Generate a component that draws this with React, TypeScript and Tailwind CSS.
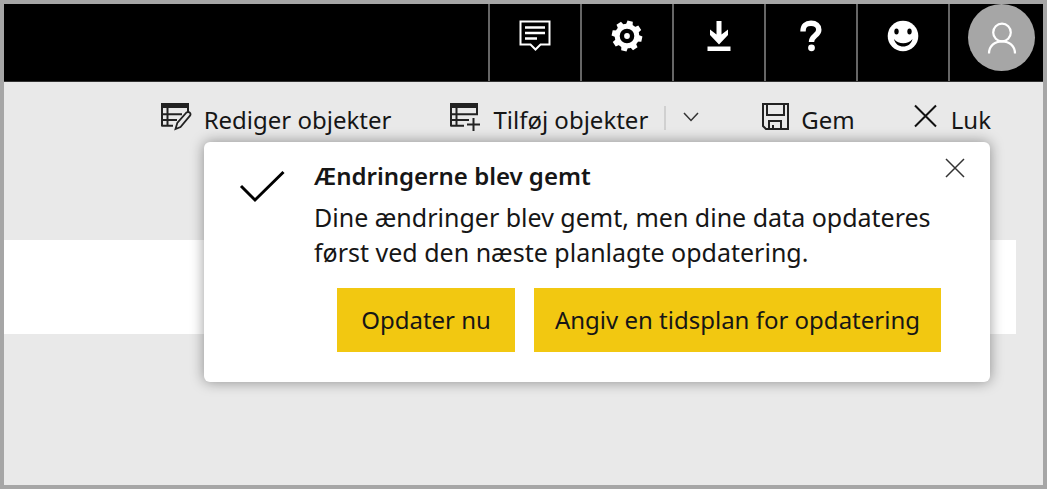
import type { ReactNode } from "react";

function HeaderButton({ label, children }: { label: string; children: ReactNode }) {
  return (
    <button
      type="button"
      aria-label={label}
      className="flex w-[92px] justify-center border-l-2 border-[#666666] pt-4 text-white"
    >
      <svg width="32" height="32" viewBox="0 0 32 32" fill="none">
        {children}
      </svg>
    </button>
  );
}

function TableIcon({ children }: { children: ReactNode }) {
  return (
    <svg className="shrink-0" width="32" height="30" viewBox="0 0 32 30" fill="none" stroke="#222222" strokeWidth="2">
      <path d="M1 1h28v5H1z" fill="#222222" stroke="none" />
      {children}
    </svg>
  );
}

function Header() {
  return (
    <header className="flex h-[78px] justify-end overflow-hidden border-b border-[#333333] bg-black">
      <HeaderButton label="Kommentarer">
        <path d="M1.5 1.5h29v23h-9l-5 5-5-5h-10z" stroke="currentColor" strokeWidth="2" />
        <path d="M6 7.5h20M6 13h20M6 18.500h12" stroke="currentColor" strokeWidth="2.400" />
      </HeaderButton>
      <HeaderButton label="Indstillinger">
        <g fill="currentColor">
          <circle cx="16" cy="16" r="9.800" fill="none" stroke="currentColor" strokeWidth="5" />
          <circle cx="16" cy="16" r="2.900" />
          <g transform="rotate(12 16 16)">
            <path d="M13.300 0.800h5.400l1 6h-7.400zM13.300 31.200h5.400l1-6h-7.400z" />
            <path d="M13.300 0.800h5.400l1 6h-7.400zM13.300 31.200h5.400l1-6h-7.400z" transform="rotate(45 16 16)" />
            <path d="M13.300 0.800h5.400l1 6h-7.400zM13.300 31.200h5.400l1-6h-7.400z" transform="rotate(90 16 16)" />
            <path d="M13.300 0.800h5.400l1 6h-7.400zM13.300 31.200h5.400l1-6h-7.400z" transform="rotate(135 16 16)" />
          </g>
        </g>
      </HeaderButton>
      <HeaderButton label="Hent">
        <path d="M13.500 1h5v13.500l6.500-5v5.500L16 24.500 7 15V9.500l6.500 5z" fill="currentColor" />
        <path d="M4.500 26.500h23v4.500h-23z" fill="currentColor" />
      </HeaderButton>
      <HeaderButton label="Hjælp">
        <path
          d="M8 11.500C8 5.500 11 3.300 16 3.300c5 0 7.800 2.700 7.800 6.400 0 5.800-7.300 6-7.300 12.300"
          stroke="currentColor"
          strokeWidth="5.400"
        />
        <circle cx="16.500" cy="27.800" r="3.400" fill="currentColor" />
      </HeaderButton>
      <HeaderButton label="Feedback">
        <circle cx="16" cy="16" r="15.300" fill="currentColor" />
        <ellipse cx="9.500" cy="11.500" rx="2.200" ry="2.900" fill="black" />
        <ellipse cx="22.500" cy="11.500" rx="2.200" ry="2.900" fill="black" />
        <path d="M7 19c4.500 5.800 14 5.800 18.500 0-2 10-16.500 10-18.500 0z" fill="black" />
      </HeaderButton>
      <div className="flex w-[95px] items-start justify-end border-l-2 border-[#666666] pr-2">
        <button
          type="button"
          aria-label="Konto"
          className="flex h-[67px] w-[67px] items-center justify-center rounded-full bg-[#a6a6a6]"
        >
          <svg width="30" height="32" viewBox="0 0 30 32" fill="none" stroke="white" strokeWidth="2.200">
            <circle cx="15" cy="10.500" r="8.800" />
            <path d="M2 31.500C2 24 7.500 19.300 15 19.300S28 24 28 31.500" />
          </svg>
        </button>
      </div>
    </header>
  );
}

function Toolbar() {
  return (
    <div role="toolbar" className="flex items-start justify-end pt-5 pr-[52px] text-2xl leading-9">
      <button type="button" className="mr-[58px] flex items-start gap-3 whitespace-nowrap">
        <TableIcon>
          <path d="M28 6v5M2 6v18.500M7.500 6v18M2 12.200h20M2 18h15M2 23.700h11" />
          <path d="M15.500 27l1.800-6L26.500 10.500c2.500-1.500 5 1 3.500 3.200L20.500 25z" strokeWidth="1.800" />
        </TableIcon>
        Rediger objekter
      </button>
      <button type="button" className="flex items-start gap-3 whitespace-nowrap">
        <TableIcon>
          <path d="M28 6v6.200M2 6v18.500M7.500 6v17M2 12.200h27M2 18h18M2 23.700h13M24.500 16v13M18 22.500h13" />
        </TableIcon>
        Tilføj objekter
      </button>
      <span className="mt-1 ml-4 h-6 w-[2px] bg-[#d0d0d0]" />
      <button type="button" aria-label="Flere valgmuligheder" className="mt-2 mr-[62px] ml-4">
        <svg width="18" height="14" viewBox="0 0 18 14" fill="none" stroke="#333333" strokeWidth="1.500">
          <path d="M2 3l7 7.500L16 3" />
        </svg>
      </button>
      <button type="button" className="mr-[58px] flex items-start gap-3">
        <svg className="shrink-0" width="27" height="28" viewBox="0 0 27 28" fill="none" stroke="#222222" strokeWidth="2">
          <path d="M1 2h25v25H4l-3-3z" />
          <path d="M5 2v11h17V2M7 27v-8h12v8M11 27v-4" />
        </svg>
        Gem
      </button>
      <button type="button" className="flex items-start gap-3">
        <svg className="shrink-0" width="26" height="28" viewBox="0 0 26 28" fill="none" stroke="#111111" strokeWidth="2">
          <path d="M2 3.500l21 21M23 3.500l-21 21" />
        </svg>
        Luk
      </button>
    </div>
  );
}

function SavedNotice() {
  return (
    <section
      role="dialog"
      aria-labelledby="notice-title"
      className="absolute top-[138px] right-[53px] flex w-[786px] max-w-full items-start rounded-md bg-white pt-4 pr-[22px] pb-[30px] pl-[34px] shadow-[0_0_14px_rgba(0,0,0,0.4)]"
    >
      <svg className="mt-3 mr-[28px] shrink-0" width="48" height="36" viewBox="0 0 48 36" fill="none" stroke="black" strokeWidth="3">
        <path d="M3 16l14 14L45.500 2" />
      </svg>
      <div className="grow">
        <h1 id="notice-title" className="text-2xl leading-9 font-semibold">
          Ændringerne blev gemt
        </h1>
        <p className="mt-1.5 text-[25px] leading-[35px]">
          Dine ændringer blev gemt, men dine data opdateres
          <br />
          først ved den næste planlagte opdatering.
        </p>
        <div className="mt-[18px] flex justify-end gap-[19px] pr-px text-2xl whitespace-nowrap">
          <button type="button" className="h-16 bg-[#f2c811] px-6">
            Opdater nu
          </button>
          <button type="button" className="h-16 bg-[#f2c811] px-[21px]">
            Angiv en tidsplan for opdatering
          </button>
        </div>
      </div>
      <button type="button" aria-label="Luk meddelelse" className="shrink-0">
        <svg width="26" height="20" viewBox="0 0 26 20" fill="none" stroke="#333333" strokeWidth="1.500">
          <path d="M4 1l18 18M22 1L4 19" />
        </svg>
      </button>
    </section>
  );
}

export default function App() {
  return (
    <div className="relative min-h-screen border-4 border-[#a6a6a6] bg-[#e9e9e9] font-['Noto_Sans',sans-serif] text-[#161616]">
      <Header />
      <Toolbar />
      <main className="mt-[102px] mr-[27px] h-[94px] bg-white" />
      <SavedNotice />
    </div>
  );
}
